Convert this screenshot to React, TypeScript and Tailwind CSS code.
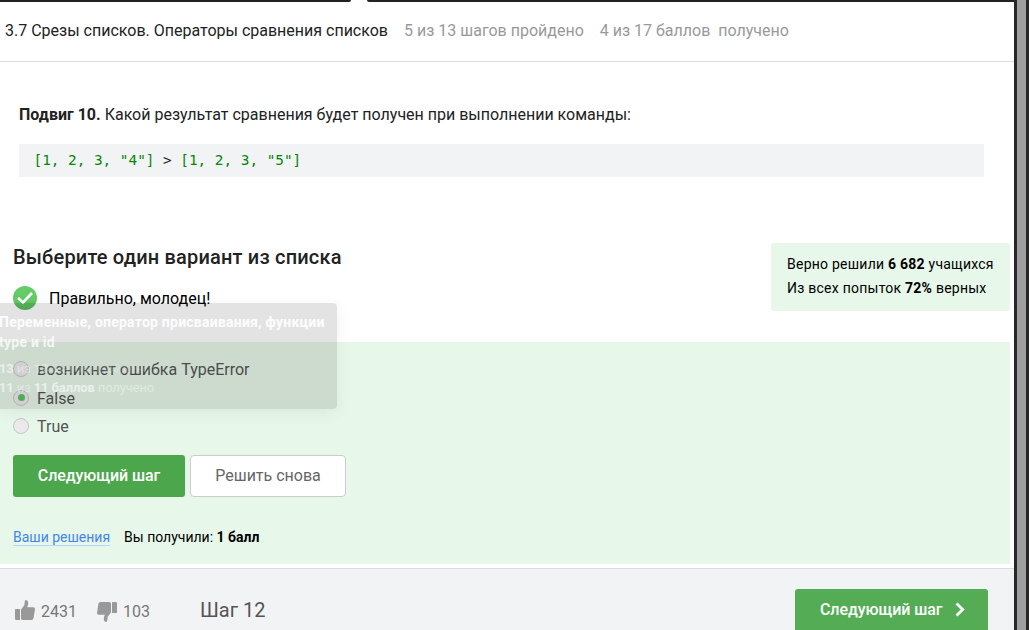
import React from "react";

type OptionProps = { label: string; checked?: boolean };

function Option({ label, checked }: OptionProps) {
  return (
    <label className="flex h-[28.5px] items-center gap-2 text-[16px]">
      <span className="flex size-4 items-center justify-center rounded-full border border-[#c9c5c9] bg-[#ebe9eb]">
        {checked && <span className="size-[7px] rounded-full bg-[#5fc060]" />}
      </span>
      <span className="pt-[2px] text-[#555]">{label}</span>
    </label>
  );
}

function Thumb({ down }: { down?: boolean }) {
  return (
    <svg
      viewBox="0 0 20 20"
      className={down ? "size-5 rotate-180" : "size-5"}
      fill="#999"
    >
      <path d="M0 9.5Q0 9 .5 9H4.5Q5 9 5 9.5V19.5Q5 20 4.5 20H1Q0 20 0 19Z" />
      <path d="M6 9.5L9.3 5.2L9.8 1.3Q10 0 11.2 0Q13.2 .4 13.2 3Q13.2 5 12.2 7.3H18.5Q20 7.4 20 9L18.6 18Q18.2 20 16.4 20H8Q6 20 6 18.5Z" />
    </svg>
  );
}

export default function App() {
  return (
    <div className="flex h-[630px] w-[1029px] overflow-hidden bg-[#272727] font-['Roboto','Liberation_Sans',sans-serif] text-[#222]">
      <div className="relative flex w-[1014px] flex-col bg-white">
        <div className="flex h-[2px] shrink-0 justify-between">
          <span className="w-[351px] rounded-br-[2px] bg-[#222]" />
          <span className="w-[647px] rounded-bl-[2px] bg-[#222]" />
        </div>
        <header className="flex h-[60px] shrink-0 items-center gap-4 border-b border-[#dcdcdc] pb-[2px] pl-[5px] text-[16px] whitespace-pre">
          <h1>3.7 Срезы списков. Операторы сравнения списков</h1>
          <span className="text-[#999]">5 из 13 шагов пройдено</span>
          <span className="text-[#999]">4 из 17 баллов  получено</span>
        </header>

        <section className="h-[181px] shrink-0 pt-[41px] pr-[30px] pl-[19px]">
          <p className="text-[16px] leading-6">
            <b>Подвиг 10.</b> Какой результат сравнения будет получен при выполнении команды:
          </p>
          <pre className="mt-[17px] h-[33px] bg-[#f2f3f5] pl-[14.5px] font-['DejaVu_Sans_Mono',monospace] text-[14.35px] leading-[33px] text-[#078507]">
            [1, 2, 3, "4"] <span className="text-[#222]">&gt;</span> [1, 2, 3, "5"]
          </pre>
        </section>

        <section className="flex h-[99px] shrink-0 justify-between pr-1 pl-[13px]">
          <div>
            <h2 className="text-[20px] leading-7 font-medium tracking-[0.18px]">Выберите один вариант из списка</h2>
            <div className="mt-[15px] flex h-6 items-center gap-3 text-[16px] text-black">
              <svg viewBox="0 0 24 24" className="size-6">
                <defs>
                  <linearGradient id="ok" x1="0" y1="0" x2="0" y2="1">
                    <stop offset="0" stopColor="#66cc66" />
                    <stop offset="0.55" stopColor="#63cb65" />
                    <stop offset="1" stopColor="#5cb85d" />
                  </linearGradient>
                </defs>
                <circle cx="12" cy="12" r="12" fill="url(#ok)" />
                <path d="M5 12L10 16.5L19 7" fill="none" stroke="#fff" strokeWidth="2.6" />
              </svg>
              <span className="pt-[2px]">Правильно, молодец!</span>
            </div>
          </div>
          <div className="h-[68px] w-[239px] rounded-[3px] bg-[#e7f7e9] pt-[9px] pl-4 text-[14px] leading-6 tracking-[0.24px] text-black">
            <p>Верно решили <b>6 682</b> учащихся</p>
            <p>Из всех попыток <b>72%</b> верных</p>
          </div>
        </section>

        <section className="mr-1 h-[222px] shrink-0 bg-[#e7f7e9] pt-[13px] pl-[13px]">
          <div>
            <Option label="возникнет ошибка TypeError" />
            <Option label="False" checked />
            <Option label="True" />
          </div>
          <div className="mt-[14.5px] flex gap-[5px] text-[16px]">
            <button className="h-[42px] w-[172px] rounded-[3px] bg-[#4ca64c] font-medium tracking-[-0.08px] text-white">Следующий шаг</button>
            <button className="h-[42px] w-[156px] rounded-[4px] border border-[#ccc] bg-white text-[#666]">Решить снова</button>
          </div>
          <div className="mt-[30px] flex items-start gap-[14px] text-[14px] leading-5 text-black">
            <a className="h-[19px] border-b border-[#b4d8f7] text-[#4485ed]">Ваши решения</a>
            <span>Вы получили: <b>1 балл</b></span>
          </div>
        </section>

        <footer className="mt-1 flex h-[62px] shrink-0 border-t border-[#dcdcdc] bg-[#f2f3f5] pr-[26px] pl-[15px]">
          <div className="mt-[31px] flex h-5 items-center text-[16px] text-[#777]">
            <Thumb />
            <span className="ml-[6px] w-[56px] pt-[3px]">2431</span>
            <span className="pt-[3px]"><Thumb down /></span>
            <span className="ml-[6px] w-[77px] pt-[3px]">103</span>
            <span className="text-[20px] text-[#555]">Шаг 12</span>
          </div>
          <button className="mt-5 ml-auto flex h-[46px] w-[193px] items-center gap-[13px] rounded-[3px] bg-[#54ad55] pb-[5px] pl-[25px] text-[16px] font-medium tracking-[-0.08px] text-white">
            Следующий шаг
            <svg viewBox="0 0 10 15" className="h-[15px] w-[10px]" fill="none" stroke="white" strokeWidth="2.8">
              <path d="M1.5 1.5L7.7 7.5L1.5 13.5" />
            </svg>
          </button>
        </footer>

        <div className="absolute top-[303px] left-0 h-[106px] w-[337px] rounded-r-[4px] bg-black/11 pt-[9px] whitespace-nowrap text-white/90 shadow-[0_4px_16px_rgba(0,0,0,0.06)]">
          <p className="-ml-px text-[14px] leading-5 font-bold tracking-[0.24px]">
            Переменные, оператор присваивания, функции
            <br />
            <span className="text-white/75">type и id</span>
          </p>
          <div className="mt-[7px] -ml-px text-[13px] leading-[19px] tracking-[-0.12px] text-white/40">
            <p><b className="text-white/60">13</b> из <b className="text-white/40">13</b> <span className="text-white/20"><b>шагов</b> пройдено</span></p>
            <p><b className="text-white/60">11</b> из <b className="text-white/60">11 баллов</b> получено</p>
          </div>
        </div>
      </div>
      <div className="ml-[3px] w-[9px] bg-[#9f9f9f]" />
    </div>
  );
}
